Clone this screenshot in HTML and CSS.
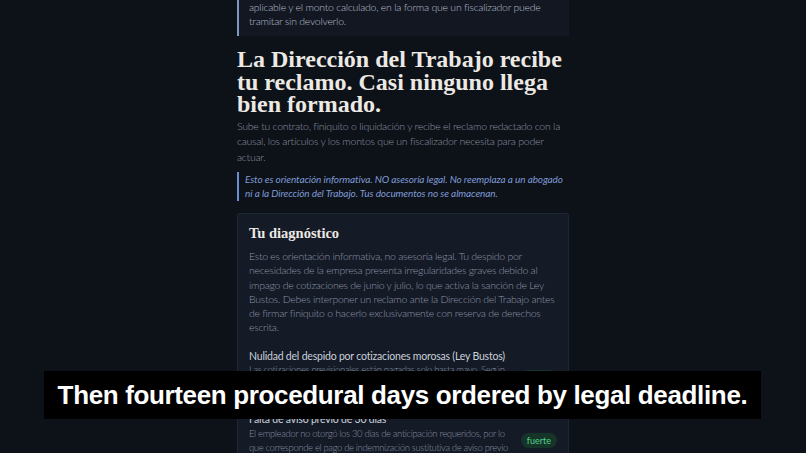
FILE: index.html
```html
<!DOCTYPE html>
<html lang="es">
<head>
<meta charset="utf-8">
<title>Reclamo Dirección del Trabajo</title>
<link rel="stylesheet" href="styles.css">
</head>
<body>
<main class="page">
  <div class="quote">
    Recibes un escrito con la causal, las normas infringidas, la sanción<br>aplicable y el monto calculado, en la forma que un fiscalizador puede tramitar sin devolverlo.
  </div>

  <h1 class="title">La Dirección del Trabajo recibe tu reclamo. Casi ninguno llega bien formado.</h1>

  <p class="lead">Sube tu contrato, finiquito o liquidación y recibe el reclamo redactado con la causal, los artículos y los montos que un fiscalizador necesita para poder actuar.</p>

  <p class="note">Esto es orientación informativa. NO asesoría legal. No reemplaza a un abogado ni a la Dirección del Trabajo. Tus documentos no se almacenan.</p>

  <section class="card">
    <h2 class="card-title">Tu diagnóstico</h2>
    <p class="card-text">Esto es orientación informativa, no asesoría legal. Tu despido por necesidades de la empresa presenta irregularidades graves debido al impago de cotizaciones de junio y julio, lo que activa la sanción de Ley Bustos. Debes interponer un reclamo ante la Dirección del Trabajo antes de firmar finiquito o hacerlo exclusivamente con reserva de derechos escrita.</p>

    <div class="item">
      <div class="item-body">
        <div class="item-title">Nulidad del despido por cotizaciones morosas (Ley Bustos)</div>
        <div class="item-text">Las cotizaciones previsionales están pagadas solo hasta mayo. Según el certificado de la AFP, junio y julio no fueron enteradas, por lo que el despido no produce efecto.</div>
      </div>
      <span class="badge">fuerte</span>
    </div>

    <div class="item">
      <div class="item-body">
        <div class="item-title">Falta de aviso previo de 30 días</div>
        <div class="item-text">El empleador no otorgó los 30 días de anticipación requeridos, por lo que corresponde el pago de indemnización sustitutiva de aviso previo equivalente a una remuneración mensual.</div>
      </div>
      <span class="badge">fuerte</span>
    </div>
  </section>
</main>

<div class="caption">Then fourteen procedural days ordered by legal deadline.</div>
</body>
</html>
```

FILE: styles.css
```css
html, body {
  margin: 0;
  padding: 0;
}

body {
  background: #0d1118;
  font-family: "Lato", "Open Sans", sans-serif;
  font-weight: 300;
  color: #8d96a6;
  height: 453px;
  overflow: hidden;
}

.page {
  width: 332px;
  margin: -24px auto 0;
}

.quote {
  background: #121722;
  border-left: 2px solid #7f95c2;
  padding: 10px 12px 8px 10px;
  font-size: 10.5px;
  line-height: 14px;
  letter-spacing: -0.25px;
  color: #b7bfcc;
}

.title {
  font-family: "Liberation Serif", "Times New Roman", serif;
  font-weight: 700;
  font-size: 24px;
  line-height: 22.5px;
  color: #ece9e4;
  margin: 12px 0 3px;
}

.lead {
  font-size: 10.5px;
  line-height: 15.5px;
  letter-spacing: -0.25px;
  color: #8b94a3;
  margin: 0 0 7px;
}

.note {
  margin: 0;
  border-left: 2px solid #6d8dd0;
  padding: 1px 0 1px 6px;
  font-style: italic;
  font-size: 10px;
  line-height: 13.5px;
  letter-spacing: -0.1px;
  color: #7f9bd6;
  font-weight: 400;
}

.card {
  margin-top: 12px;
  background: #141a26;
  border: 1px solid #1e2533;
  border-radius: 2px;
  padding: 10px 11px 12px 11px;
}

.card-title {
  font-family: "Liberation Serif", "Times New Roman", serif;
  font-weight: 700;
  font-size: 14.5px;
  line-height: 18px;
  color: #ece9e4;
  margin: 0 0 7px;
}

.card-text {
  margin: 0 0 14px;
  font-size: 10.5px;
  line-height: 14.3px;
  letter-spacing: -0.28px;
  color: #8d96a6;
}

.item {
  display: flex;
  align-items: center;
  gap: 12px;
  margin-bottom: 7px;
}

.item-body {
  flex: 1;
}

.item-title {
  font-size: 10.5px;
  line-height: 14.5px;
  letter-spacing: -0.2px;
  color: #c9d0da;
  font-weight: 400;
}

.item-text {
  font-size: 9.5px;
  line-height: 14px;
  letter-spacing: -0.36px;
  color: #858ea0;
}

.badge {
  flex: none;
  background: #163428;
  color: #4ed08b;
  font-size: 9px;
  font-weight: 400;
  padding: 2px 6px;
  border-radius: 8px;
  line-height: 11px;
}

.caption {
  position: absolute;
  left: 44px;
  top: 371px;
  width: 717px;
  height: 48px;
  background: #000;
  color: #fff;
  font-family: "Liberation Sans", Arial, sans-serif;
  font-weight: 700;
  font-size: 26px;
  letter-spacing: -0.35px;
  line-height: 48px;
  text-align: center;
  white-space: nowrap;
}
```
